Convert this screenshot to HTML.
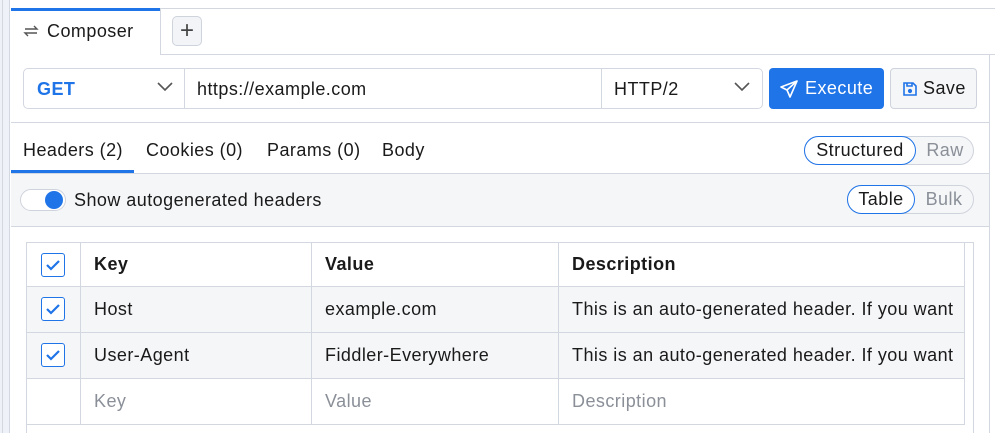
<!DOCTYPE html>
<html><head><style>
*{box-sizing:border-box;margin:0;padding:0}
body{width:995px;height:433px;overflow:hidden;background:#fff;font-family:"Liberation Sans",sans-serif;font-size:18px;letter-spacing:0.45px;color:#1a1a1a;position:relative}
.a{position:absolute;white-space:nowrap}
.pill{position:absolute;border:1px solid #cfd3dc;border-radius:15px;background:#f5f6f8;height:29px}
.pill span{position:absolute;top:0;height:27px;line-height:26px;text-align:center;color:#8a8f98}
.pill .on{border:1.5px solid #1f74e8;border-radius:15px;background:#fff;color:#1a1a1a;top:-1px;height:29px}
.cb{position:absolute;width:24px;height:24px;border:1.5px solid #1f74e8;border-radius:3px;background:#fff}
td{border:1px solid #d3d7e0;padding:0 0 0 13px;height:46px;white-space:nowrap;overflow:hidden}
table{border-collapse:collapse;table-layout:fixed;position:absolute;left:26px;top:242px;width:938px}
</style></head><body>
<div class="a" style="left:0;top:0;width:10px;height:433px;background:#eef1f8;border-right:1px solid #d3d7e0"></div>
<div class="a" style="left:2px;top:0;width:1px;height:433px;background:#d3d7e0"></div>
<div class="a" style="left:160px;top:8px;width:835px;height:1px;background:#d3d7e0"></div>
<div class="a" style="left:160px;top:54px;width:835px;height:1px;background:#d3d7e0"></div>
<div class="a" style="left:11px;top:8px;width:149px;height:3px;background:#1f74e8"></div>
<div class="a" style="left:160px;top:8px;width:1px;height:47px;background:#d3d7e0"></div>
<div class="a" style="left:989px;top:55px;width:1px;height:378px;background:#d3d7e0"></div>
<svg class="a" style="left:22px;top:23px" width="18" height="16" viewBox="0 0 18 16" fill="none" stroke="#555" stroke-width="1.4"><path d="M3 6h12l-3-3M15 10H3l3 3"/></svg>
<div class="a" style="left:47px;top:21px">Composer</div>
<div class="a" style="left:172px;top:16px;width:30px;height:30px;border:1px solid #cfd3dc;border-radius:5px;background:#f3f4f7;text-align:center;line-height:27px;font-size:24px;color:#444;letter-spacing:0">+</div>
<div class="a" style="left:23px;top:68px;width:740px;height:41px;border:1px solid #d3d7e0;border-radius:5px"></div>
<div class="a" style="left:184px;top:69px;width:1px;height:39px;background:#d3d7e0"></div>
<div class="a" style="left:601px;top:69px;width:1px;height:39px;background:#d3d7e0"></div>
<div class="a" style="left:37px;top:79px;color:#1f74e8;font-weight:bold">GET</div>
<svg class="a" style="left:157px;top:82px" width="16" height="10"><path d="M1 1l7 7 7-7" fill="none" stroke="#555" stroke-width="1.6"/></svg>
<div class="a" style="left:197px;top:79px">https://example.com</div>
<div class="a" style="left:614px;top:79px">HTTP/2</div>
<svg class="a" style="left:734px;top:82px" width="16" height="10"><path d="M1 1l7 7 7-7" fill="none" stroke="#555" stroke-width="1.6"/></svg>
<div class="a" style="left:769px;top:68px;width:115px;height:41px;background:#1f74e8;border-radius:4px;color:#fff">
<svg class="a" style="left:11px;top:12px" width="18" height="18" viewBox="0 0 18 18" fill="none" stroke="#fff" stroke-width="1.6" stroke-linejoin="round"><path d="M17 1L1 7l6 3 3 7zM7 10l10-9"/></svg>
<span class="a" style="left:36px;top:10px">Execute</span></div>
<div class="a" style="left:890px;top:68px;width:87px;height:41px;background:#f5f6f8;border:1px solid #cfd3dc;border-radius:4px">
<svg class="a" style="left:11px;top:12px" width="16" height="16" viewBox="0 0 16 16" fill="none" stroke="#1f74e8" stroke-width="1.6"><path d="M2 2h9l3 3v9H2zM5 2v3h5V2"/><circle cx="8" cy="10" r="1.3" fill="#1f74e8"/></svg>
<span class="a" style="left:32px;top:9px;color:#1a1a1a">Save</span></div>
<div class="a" style="left:11px;top:122px;width:978px;height:1px;background:#d3d7e0"></div>
<div class="a" style="left:23px;top:140px">Headers (2)</div>
<div class="a" style="left:146px;top:140px">Cookies (0)</div>
<div class="a" style="left:267px;top:140px">Params (0)</div>
<div class="a" style="left:382px;top:140px">Body</div>
<div class="a" style="left:11px;top:170px;width:123px;height:3px;background:#1f74e8"></div>
<div class="pill" style="left:804px;top:136px;width:170px"><span class="on" style="left:-1px;width:112px">Structured</span><span style="left:112px;width:56px">Raw</span></div>
<div class="a" style="left:11px;top:173px;width:978px;height:54px;background:#f5f6f8;border-top:1px solid #d3d7e0;border-bottom:1px solid #d3d7e0"></div>
<div class="a" style="left:20px;top:189px;width:46px;height:22px;border:1px solid #cfd3dc;border-radius:11px;background:#fff"></div>
<div class="a" style="left:45px;top:191px;width:18px;height:18px;border-radius:50%;background:#1f74e8"></div>
<div class="a" style="left:74px;top:190px">Show autogenerated headers</div>
<div class="pill" style="left:847px;top:185px;width:127px"><span class="on" style="left:-1px;width:68px">Table</span><span style="left:67px;width:58px">Bulk</span></div>
<div class="a" style="left:26px;top:242px;width:948px;height:191px;border:1px solid #d3d7e0;border-bottom:none"></div>
<table>
<colgroup><col style="width:54px"><col style="width:231px"><col style="width:247px"><col style="width:406px"></colgroup>
<tr><td style="height:44px"></td><td style="font-weight:bold;height:44px">Key</td><td style="font-weight:bold;height:44px">Value</td><td style="font-weight:bold;height:44px">Description</td></tr>
<tr style="background:#f5f6f8"><td></td><td>Host</td><td>example.com</td><td>This is an auto-generated header. If you want</td></tr>
<tr style="background:#f5f6f8"><td></td><td>User-Agent</td><td>Fiddler-Everywhere</td><td>This is an auto-generated header. If you want</td></tr>
<tr style="color:#8a8f98"><td></td><td>Key</td><td>Value</td><td>Description</td></tr>
</table>
<div class="cb" style="left:41px;top:253px"></div>
<div class="cb" style="left:41px;top:297px"></div>
<div class="cb" style="left:41px;top:343px"></div>
<svg class="a" style="left:41px;top:253px" width="24" height="120" fill="none" stroke="#1f74e8" stroke-width="2.2"><path d="M6 12l4 4 8-8M6 56l4 4 8-8M6 102l4 4 8-8"/></svg>
</body></html>
